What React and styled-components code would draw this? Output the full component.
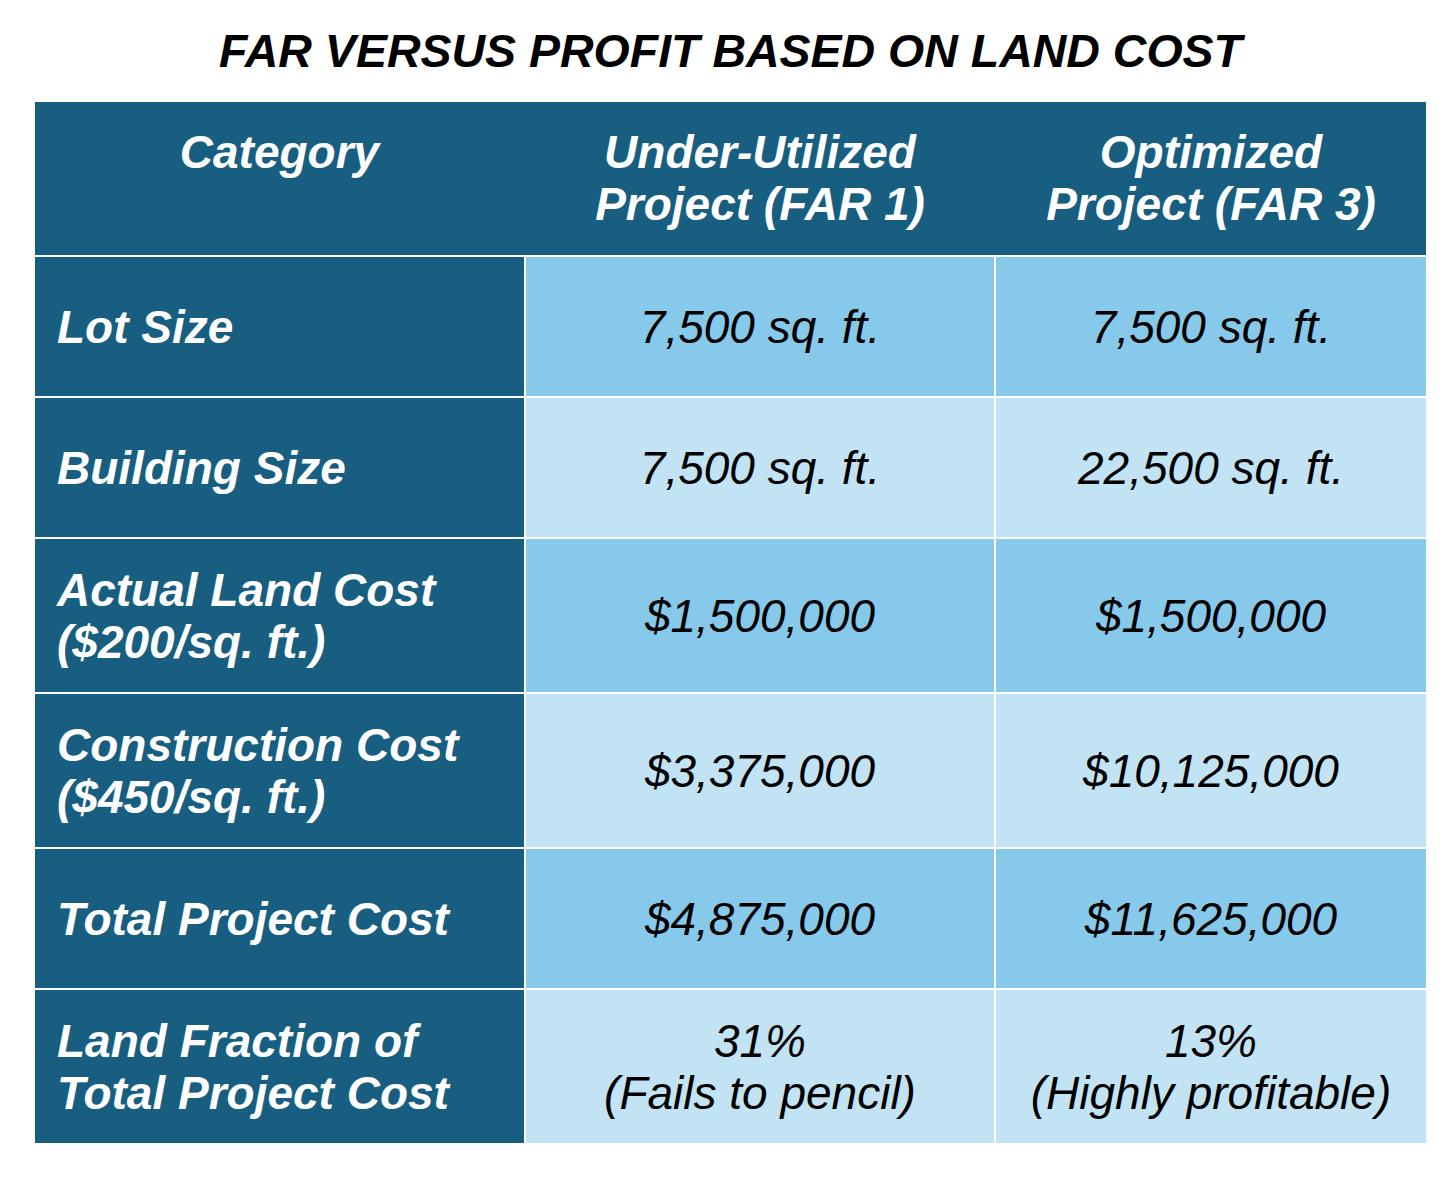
import React from 'react';
import styled, { createGlobalStyle } from 'styled-components';

const GlobalStyle = createGlobalStyle`
  html, body {
    margin: 0;
    padding: 0;
    background: #fff;
  }
  body {
    font-family: 'Liberation Sans', Arial, sans-serif;
  }
`;

const Page = styled.div`
  width: 1456px;
  padding: 25px 0 44px 35px;
  box-sizing: border-box;
`;

const Title = styled.h1`
  margin: 0 0 25px;
  width: 1391px;
  font-size: 46.5px;
  line-height: 52px;
  font-weight: 700;
  font-style: italic;
  text-align: center;
  color: #000;
`;

const Table = styled.div`
  width: 1391px;
  display: grid;
  grid-template-columns: 489px 468px 430px;
  column-gap: 2px;
  row-gap: 2px;
  background: #fff;
`;

const HeaderRow = styled.div`
  grid-column: 1 / -1;
  display: grid;
  grid-template-columns: 489px 468px 430px;
  column-gap: 2px;
  background: #175e81;
  height: 153px;
`;

const HeaderCell = styled.div`
  padding-top: 24px;
  text-align: center;
  color: #fff;
  font-size: 46px;
  line-height: 52px;
  font-weight: 700;
  font-style: italic;
`;

const LabelCell = styled.div`
  background: #175e81;
  color: #fff;
  min-height: 139px;
  box-sizing: border-box;
  padding: 24.5px 20px 24.5px 22px;
  display: flex;
  align-items: center;
  font-size: 46px;
  line-height: 52px;
  font-weight: 700;
  font-style: italic;
`;

const ValueCell = styled.div`
  background: ${({ $shade }) => ($shade ? '#86c9ea' : '#c2e3f3')};
  color: #000;
  min-height: 139px;
  box-sizing: border-box;
  padding: 24.5px 10px;
  display: flex;
  align-items: center;
  justify-content: center;
  text-align: center;
  font-size: 46px;
  line-height: 52px;
  font-style: italic;
`;

const rows = [
  { label: ['Lot Size'], a: ['7,500 sq. ft.'], b: ['7,500 sq. ft.'] },
  { label: ['Building Size'], a: ['7,500 sq. ft.'], b: ['22,500 sq. ft.'] },
  {
    label: ['Actual Land Cost', '($200/sq. ft.)'],
    a: ['$1,500,000'],
    b: ['$1,500,000'],
  },
  {
    label: ['Construction Cost', '($450/sq. ft.)'],
    a: ['$3,375,000'],
    b: ['$10,125,000'],
  },
  { label: ['Total Project Cost'], a: ['$4,875,000'], b: ['$11,625,000'] },
  {
    label: ['Land Fraction of', 'Total Project Cost'],
    a: ['31%', '(Fails to pencil)'],
    b: ['13%', '(Highly profitable)'],
  },
];

const Lines = ({ lines }) => (
  <div>
    {lines.map((line) => (
      <div key={line}>{line}</div>
    ))}
  </div>
);

const App = () => (
  <>
    <GlobalStyle />
    <Page>
      <Title>FAR VERSUS PROFIT BASED ON LAND COST</Title>
      <Table>
        <HeaderRow>
          <HeaderCell>Category</HeaderCell>
          <HeaderCell>
            Under-Utilized
            <br />
            Project (FAR 1)
          </HeaderCell>
          <HeaderCell>
            Optimized
            <br />
            Project (FAR 3)
          </HeaderCell>
        </HeaderRow>
        {rows.map((row, i) => (
          <React.Fragment key={row.label[0]}>
            <LabelCell>
              <Lines lines={row.label} />
            </LabelCell>
            <ValueCell $shade={i % 2 === 0}>
              <Lines lines={row.a} />
            </ValueCell>
            <ValueCell $shade={i % 2 === 0}>
              <Lines lines={row.b} />
            </ValueCell>
          </React.Fragment>
        ))}
      </Table>
    </Page>
  </>
);

export default App;
